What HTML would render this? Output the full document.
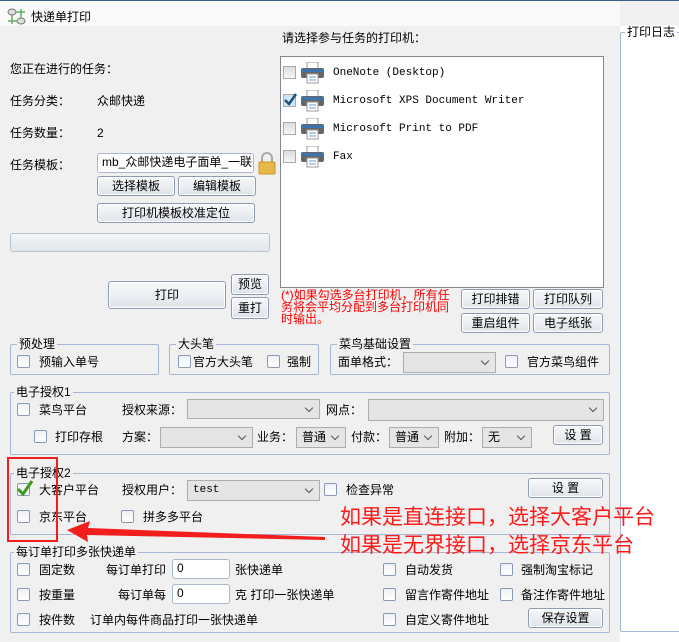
<!DOCTYPE html>
<html><head><meta charset="utf-8"><style>
*{box-sizing:border-box;margin:0;padding:0}
body{width:679px;height:642px;overflow:hidden;background:#f0f0f0;font-family:"Liberation Sans","Noto Sans CJK SC",sans-serif;font-size:12px;color:#000;position:relative}
.a{position:absolute;white-space:nowrap;line-height:14px}
.btn{position:absolute;border:1px solid #8d9bb0;border-radius:3px;background:linear-gradient(#f7f8fa,#dfe4ea);text-align:center;font-size:12px;box-shadow:inset 0 0 0 1px #fff}
.cb{position:absolute;width:13px;height:13px;border:1px solid #8a99b5;border-radius:2px;background:linear-gradient(#eef1f6,#fff)}
.cbg{position:absolute;width:13px;height:13px;border:1px solid #aaa;background:linear-gradient(#ddd,#f6f6f6)}
.grp{position:absolute;border:1px solid #a8b5d6;border-radius:2px}
.gt{position:absolute;top:-8px;left:6px;background:#f0f0f0;padding:0 2px;line-height:14px;white-space:nowrap}
.cmb{position:absolute;border:1px solid #adadad;background:#e5e5e5;font-size:12px;padding-left:5px;line-height:18px}
.cmb:after{content:"";position:absolute;right:7px;top:5px;width:5px;height:5px;border-right:1px solid #555;border-bottom:1px solid #555;transform:rotate(45deg)}
.inp{position:absolute;background:#fff;border:1px solid #abb8cc;border-radius:3px;padding-left:4px;line-height:16px}
.mono{font-family:"Liberation Mono",monospace;font-size:11px}
</style></head><body>
<div style="position:absolute;left:0;top:0;width:679px;height:1px;background:#3b5d8a"></div>
<div style="position:absolute;left:0;top:1px;width:620px;height:25px;background:#f9f9f9"></div>
<svg class="a" style="left:7px;top:8px" width="20" height="18" viewBox="0 0 20 18"><ellipse cx="5" cy="4" rx="4" ry="3" fill="#ddd" stroke="#777"/><ellipse cx="14" cy="13" rx="4" ry="3" fill="#ddd" stroke="#777"/><path d="M9 4h9M14 1v9M1 13h9M5 7v9" stroke="#6a6" stroke-width="1.5"/></svg>
<div class="a" style="left:31px;top:10px">快递单打印</div>

<div class="a" style="left:282px;top:31px">请选择参与任务的打印机：</div>
<div style="position:absolute;left:280px;top:56px;width:324px;height:232px;background:#fff;border:1px solid #828790"></div>
<div class="cbg" style="left:283px;top:66px"></div>
<div class="cbg" style="left:283px;top:94px;background:#cfe6f7"></div>
<svg class="a" style="left:283px;top:92px" width="15" height="15"><path d="M2 8 L6 12 L13 2" fill="none" stroke="#1e4f7c" stroke-width="2.5"/></svg>
<div class="cbg" style="left:283px;top:122px"></div>
<div class="cbg" style="left:283px;top:150px"></div>
<svg width="0" height="0" style="position:absolute"><defs><g id="pr"><rect x="6" y="0" width="11" height="8" fill="#fff" stroke="#999"/><rect x="0" y="6" width="23" height="10" rx="2" fill="#666"/><rect x="0" y="7" width="23" height="3" fill="#3d74b0"/><rect x="6" y="12" width="11" height="9" fill="#fff" stroke="#999"/><path d="M8 15h7M8 18h7" stroke="#6a9ad0"/></g></defs></svg>
<svg class="a" style="left:301px;top:62px" width="26" height="22"><use href="#pr"/></svg>
<svg class="a" style="left:301px;top:90px" width="26" height="22"><use href="#pr"/></svg>
<svg class="a" style="left:301px;top:118px" width="26" height="22"><use href="#pr"/></svg>
<svg class="a" style="left:301px;top:146px" width="26" height="22"><use href="#pr"/></svg>
<div class="a mono" style="left:333px;top:66px">OneNote (Desktop)</div>
<div class="a mono" style="left:333px;top:94px">Microsoft XPS Document Writer</div>
<div class="a mono" style="left:333px;top:122px">Microsoft Print to PDF</div>
<div class="a mono" style="left:333px;top:150px">Fax</div>

<div class="a" style="left:10px;top:62px">您正在进行的任务：</div>
<div class="a" style="left:10px;top:94px">任务分类：</div><div class="a" style="left:97px;top:94px">众邮快递</div>
<div class="a" style="left:10px;top:126px">任务数量：</div><div class="a" style="left:97px;top:126px">2</div>
<div class="a" style="left:10px;top:158px">任务模板：</div>
<div class="inp" style="left:97px;top:153px;width:157px;height:20px;overflow:hidden;white-space:nowrap">mb_众邮快递电子面单_一联</div>
<svg class="a" style="left:258px;top:151px" width="18" height="24"><path d="M4 11V7a5 5 0 0 1 10 0v4" fill="none" stroke="#aaa" stroke-width="2"/><rect x="1" y="11" width="16" height="12" rx="1" fill="#e8b94a" stroke="#c8942a"/></svg>
<div class="btn" style="left:97px;top:176px;width:78px;height:20px;line-height:18px">选择模板</div>
<div class="btn" style="left:178px;top:176px;width:78px;height:20px;line-height:18px">编辑模板</div>
<div class="btn" style="left:97px;top:203px;width:158px;height:20px;line-height:18px">打印机模板校准定位</div>
<div style="position:absolute;left:10px;top:233px;width:260px;height:19px;border:1px solid #b5c2d2;border-radius:3px;background:linear-gradient(#f4f6f8,#e2e6ea)"></div>
<div class="btn" style="left:108px;top:281px;width:118px;height:28px;line-height:26px">打印</div>
<div class="btn" style="left:231px;top:274px;width:38px;height:21px;line-height:19px">预览</div>
<div class="btn" style="left:231px;top:297px;width:38px;height:22px;line-height:20px">重打</div>
<div class="a" style="left:281px;top:289px;color:#f00;line-height:12px;white-space:normal;width:174px;font-size:12px;word-break:break-all">(*)如果勾选多台打印机，所有任务将会平均分配到多台打印机同时输出。</div>
<div class="btn" style="left:461px;top:289px;width:69px;height:20px;line-height:18px">打印排错</div>
<div class="btn" style="left:533px;top:289px;width:70px;height:20px;line-height:18px">打印队列</div>
<div class="btn" style="left:461px;top:313px;width:69px;height:20px;line-height:18px">重启组件</div>
<div class="btn" style="left:533px;top:313px;width:70px;height:20px;line-height:18px">电子纸张</div>

<div style="position:absolute;left:620px;top:26px;width:59px;height:616px;background:#fff"></div>
<div class="grp" style="left:620px;top:32px;width:70px;height:600px;border-color:#a8b5d6"><div class="gt" style="left:4px;background:#fff">打印日志</div></div>

<div class="grp" style="left:10px;top:344px;width:149px;height:31px"><div class="gt">预处理</div></div>
<div class="cb" style="left:17px;top:355px"></div><div class="a" style="left:39px;top:355px">预输入单号</div>
<div class="grp" style="left:169px;top:344px;width:150px;height:31px"><div class="gt">大头笔</div></div>
<div class="cb" style="left:178px;top:355px"></div><div class="a" style="left:193px;top:355px">官方大头笔</div>
<div class="cb" style="left:267px;top:355px"></div><div class="a" style="left:287px;top:355px">强制</div>
<div class="grp" style="left:330px;top:344px;width:280px;height:31px"><div class="gt">菜鸟基础设置</div></div>
<div class="a" style="left:338px;top:355px">面单格式：</div>
<div class="cmb" style="left:403px;top:352px;width:93px;height:21px"></div>
<div class="cb" style="left:505px;top:355px"></div><div class="a" style="left:527px;top:355px">官方菜鸟组件</div>

<div class="grp" style="left:10px;top:392px;width:600px;height:63px"><div class="gt" style="left:3px">电子授权1</div></div>
<div class="cb" style="left:17px;top:403px"></div><div class="a" style="left:39px;top:403px">菜鸟平台</div>
<div class="a" style="left:122px;top:403px">授权来源：</div>
<div class="cmb" style="left:187px;top:399px;width:133px;height:20px"></div>
<div class="a" style="left:326px;top:403px">网点：</div>
<div class="cmb" style="left:368px;top:399px;width:236px;height:22px"></div>
<div class="cb" style="left:34px;top:430px"></div><div class="a" style="left:55px;top:430px">打印存根</div>
<div class="a" style="left:122px;top:430px">方案：</div>
<div class="cmb" style="left:160px;top:427px;width:93px;height:21px"></div>
<div class="a" style="left:257px;top:430px">业务：</div>
<div class="cmb" style="left:296px;top:427px;width:50px;height:21px">普通</div>
<div class="a" style="left:351px;top:430px">付款：</div>
<div class="cmb" style="left:389px;top:427px;width:50px;height:21px">普通</div>
<div class="a" style="left:444px;top:430px">附加：</div>
<div class="cmb" style="left:482px;top:427px;width:50px;height:21px">无</div>
<div class="btn" style="left:553px;top:425px;width:50px;height:20px;line-height:18px">设 置</div>

<div class="grp" style="left:10px;top:473px;width:600px;height:62px"><div class="gt" style="left:3px">电子授权2</div></div>
<div class="cb" style="left:17px;top:483px"></div>
<svg class="a" style="left:16px;top:479px" width="18" height="18"><path d="M2 10 L7 15 L16 2" fill="none" stroke="#3c9a1e" stroke-width="3"/></svg>
<div class="a" style="left:39px;top:483px">大客户平台</div>
<div class="a" style="left:122px;top:483px">授权用户：</div>
<div class="cmb" style="left:187px;top:480px;width:133px;height:21px;font-family:'Liberation Mono',monospace;font-size:11px">test</div>
<div class="cb" style="left:324px;top:483px"></div><div class="a" style="left:346px;top:483px">检查异常</div>
<div class="btn" style="left:528px;top:478px;width:75px;height:20px;line-height:18px">设 置</div>
<div class="cb" style="left:17px;top:510px"></div><div class="a" style="left:39px;top:510px">京东平台</div>
<div class="cb" style="left:121px;top:510px"></div><div class="a" style="left:143px;top:510px">拼多多平台</div>

<div class="grp" style="left:10px;top:552px;width:600px;height:81px"><div class="gt" style="left:3px">每订单打印多张快递单</div></div>
<div class="cb" style="left:17px;top:563px"></div><div class="a" style="left:39px;top:563px">固定数</div>
<div class="a" style="left:106px;top:563px">每订单打印</div>
<div class="inp" style="left:172px;top:559px;width:58px;height:20px">0</div>
<div class="a" style="left:235px;top:563px">张快递单</div>
<div class="cb" style="left:383px;top:563px"></div><div class="a" style="left:405px;top:563px">自动发货</div>
<div class="cb" style="left:500px;top:563px"></div><div class="a" style="left:521px;top:563px">强制淘宝标记</div>
<div class="cb" style="left:17px;top:588px"></div><div class="a" style="left:39px;top:588px">按重量</div>
<div class="a" style="left:118px;top:588px">每订单每</div>
<div class="inp" style="left:172px;top:584px;width:58px;height:20px">0</div>
<div class="a" style="left:235px;top:588px">克 打印一张快递单</div>
<div class="cb" style="left:383px;top:588px"></div><div class="a" style="left:405px;top:588px">留言作寄件地址</div>
<div class="cb" style="left:500px;top:588px"></div><div class="a" style="left:521px;top:588px">备注作寄件地址</div>
<div class="cb" style="left:17px;top:613px"></div><div class="a" style="left:39px;top:613px">按件数</div>
<div class="a" style="left:90px;top:613px">订单内每件商品打印一张快递单</div>
<div class="cb" style="left:383px;top:613px"></div><div class="a" style="left:405px;top:613px">自定义寄件地址</div>
<div class="btn" style="left:528px;top:608px;width:75px;height:20px;line-height:18px">保存设置</div>

<div class="a" style="left:340px;top:506px;color:#ff1a1a;font-size:21px;line-height:24px">如果是直连接口，选择大客户平台</div>
<div class="a" style="left:340px;top:534px;color:#ff1a1a;font-size:21px;line-height:24px">如果是无界接口，选择京东平台</div>
<div style="position:absolute;left:7px;top:457px;width:51px;height:85px;border:2px solid #f21e1e"></div>
<svg class="a" style="left:60px;top:518px" width="270" height="30"><path d="M7 12 L30 3 L28 10 L265 19 L265 22 L27 17 L28 24 Z" fill="#f21e1e"/></svg>
</body></html>
